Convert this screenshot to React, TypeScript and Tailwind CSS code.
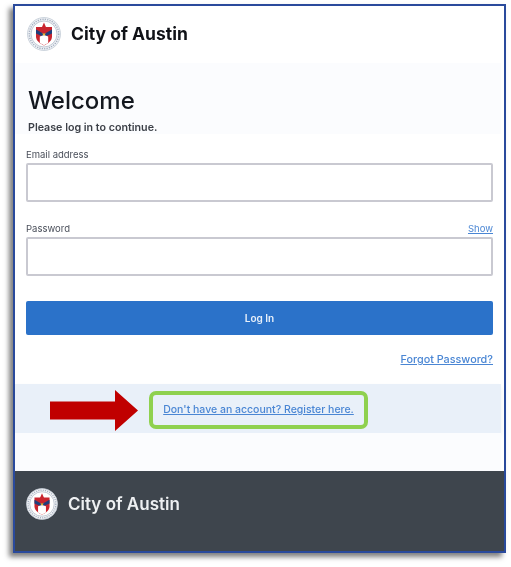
import React from "react";

const font = { sans: "font-['Inter','Liberation_Sans',sans-serif]" };

function Seal({ size, dark }: { size: number; dark?: boolean }) {
  return (
    <svg width={size} height={size} viewBox="0 0 34 34" className="shrink-0">
      <circle cx="17" cy="17" r="16.5" fill={dark ? "#f3f4f6" : "#eef1f5"} stroke="#c3cbd6" strokeWidth="0.8" />
      <circle cx="17" cy="17" r="13" fill="#fff" stroke="#9aa6b8" strokeWidth="0.6" />
      <circle cx="17" cy="17" r="14.7" fill="none" stroke="#a3aebf" strokeWidth="1.4" strokeDasharray="1.2 1.2" />
      <path d="M9 10h16v9.500c0 4.200-3.800 7-8 9-4.200-2-8-4.800-8-9z" fill="#c9252f" />
      <path d="M9 12.500l8 4.500 8-4.500v4l-8 3.500-8-3.500z" fill="#1f3f7d" />
      <path d="M12.800 19.500l4.200-1.500 4.200 1.500v6.500l-4.200 2.300-4.200-2.300z" fill="#fff" />
      <path d="M17 5.500l2.200 5h-4.400z" fill="#c9252f" />
      <path d="M15.200 16.500h3.600l-1.800 2.400z" fill="#f2c230" />
    </svg>
  );
}

function Field({ label, aside }: { label: string; aside?: string }) {
  return (
    <div>
      <div className="flex h-[17px] items-end justify-between text-[9.5px] leading-4 text-[#4a4f5a]">
        <span>{label}</span>
        {aside && <a className="text-[#4a86d4] underline">{aside}</a>}
      </div>
      <div className="h-[39px] rounded-[2px] border-2 border-[#c9c9d1] bg-white" />
    </div>
  );
}

export default function App() {
  return (
    <div className={`h-[567px] w-[511px] overflow-hidden bg-white pl-[13px] pt-1 ${font.sans}`}>
      <div className="flex h-[549px] w-[493px] flex-col border-2 border-[#2a4a9c] bg-white shadow-[-4px_4px_5px_rgba(0,0,0,0.5)] blur-[0.4px]">
        <header className="flex h-[57px] items-center gap-[10px] pb-px pl-3">
          <Seal size={34} />
          <span className="text-[17.5px] font-bold text-[#111318]">City of Austin</span>
        </header>

        <section className="mr-[3px] h-[71px] bg-[#fbfcfe] pl-[13px] pt-[22px]">
          <h1 className="text-[24px] font-medium leading-[32px] text-[#14181f]">Welcome</h1>
          <p className="mt-1 text-[10.7px] font-semibold leading-[14px] text-[#3c4048]">Please log in to continue.</p>
        </section>

        <main className="flex h-[250px] flex-col px-[11px] pt-3">
          <Field label="Email address" />
          <div className="mt-[18px]">
            <Field label="Password" aside="Show" />
          </div>
          <button className="mt-[25px] h-[34px] rounded-[2px] bg-[#2b72c9] text-[10px] font-semibold text-[#e8f0fa]">Log In</button>
          <a className="mt-[17px] self-end text-[10.8px] font-medium leading-4 text-[#4a86d4] underline">Forgot Password?</a>
        </main>

        <section className="mr-[3px] flex h-[49px] items-center bg-[#e9f0f9] pl-[35px] shadow-[0_3px_5px_rgba(0,0,0,0.06)]">
          <svg width="88" height="41" viewBox="0 0 88 41" className="mt-1 shrink-0">
            <path d="M0 11.500h65V0l23 20.500L65 41V29.500H0z" fill="#c00000" />
          </svg>
          <div className="ml-[11px] mt-[3px] flex h-[38px] w-[219px] items-center justify-center rounded-[7px] border-4 border-[#8fd14f]">
            <a className="text-[10.5px] font-medium text-[#4a86d4] underline">Don't have an account? Register here.</a>
          </div>
        </section>

        <div className="mr-[3px] h-[38px] bg-[#fbfcfe]" />

        <footer className="flex flex-1 items-start gap-[10px] bg-[#3e454d] pl-[11px] pt-[17px]">
          <Seal size={32} dark />
          <span className="mt-[5px] text-[17px] font-semibold leading-[22px] text-[#eef0f2]">City of Austin</span>
        </footer>
      </div>
    </div>
  );
}
